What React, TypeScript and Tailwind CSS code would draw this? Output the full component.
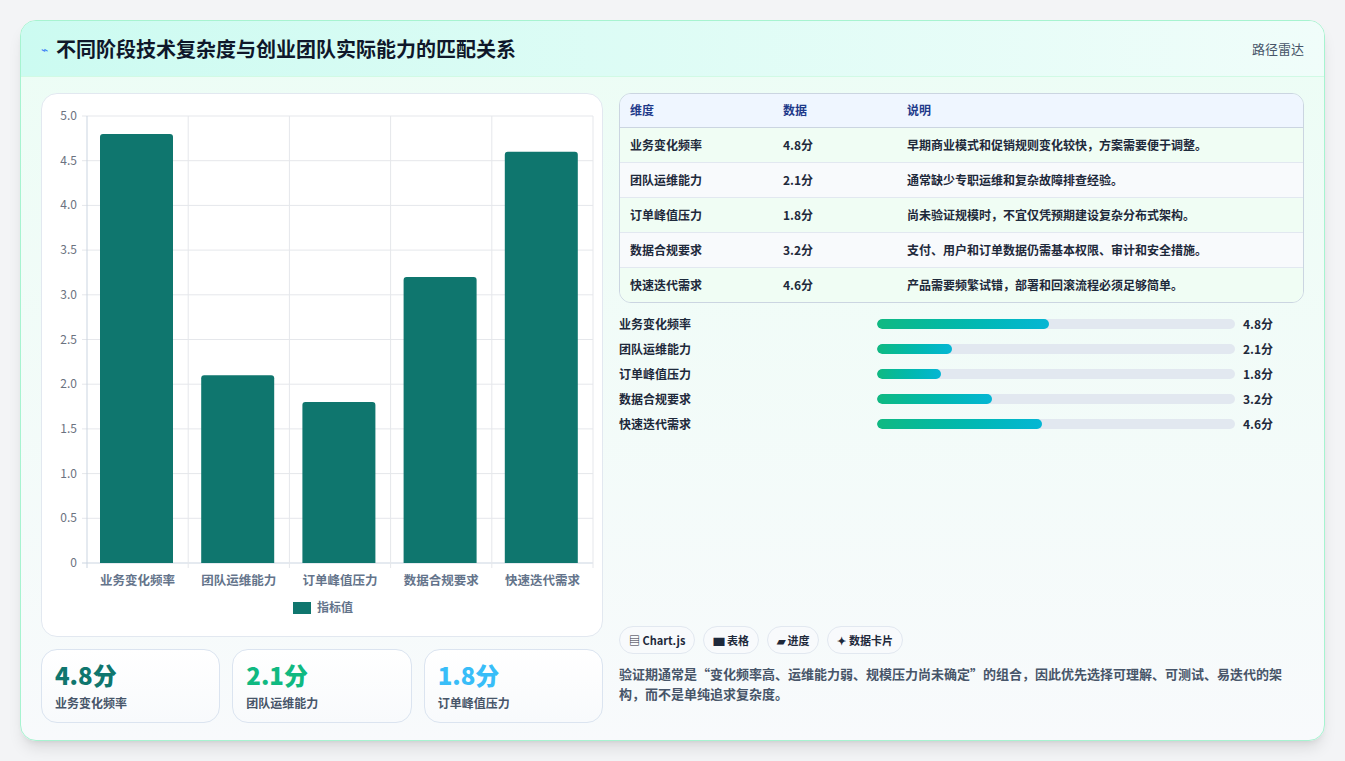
const rows = [
  { name: "业务变化频率", v: 4.8, note: "早期商业模式和促销规则变化较快，方案需要便于调整。" },
  { name: "团队运维能力", v: 2.1, note: "通常缺少专职运维和复杂故障排查经验。" },
  { name: "订单峰值压力", v: 1.8, note: "尚未验证规模时，不宜仅凭预期建设复杂分布式架构。" },
  { name: "数据合规要求", v: 3.2, note: "支付、用户和订单数据仍需基本权限、审计和安全措施。" },
  { name: "快速迭代需求", v: 4.6, note: "产品需要频繁试错，部署和回滚流程必须足够简单。" },
];

const font = { fontFamily: '"Noto Sans CJK SC", "Noto Sans", sans-serif' };

function Chart() {
  const x0 = 45, x1 = 551, yTop = 22, yBot = 469;
  const cw = (x1 - x0) / 5;
  const scale = (yBot - yTop) / 5;
  const ticks = [0, 0.5, 1, 1.5, 2, 2.5, 3, 3.5, 4, 4.5, 5];
  return (
    <svg width="562" height="543" className="block" style={font}>
      {ticks.map((t) => {
        const y = yBot - t * scale;
        return (
          <g key={t}>
            <line x1={x0 - 5} x2={x1} y1={y} y2={y} stroke={t === 0 ? "#cbd5e1" : "#e5e7eb"} />
            <text x={x0 - 10} y={y + 4} textAnchor="end" fontSize="12" fill="#6b7280">{t === 0 ? "0" : t.toFixed(1)}</text>
          </g>
        );
      })}
      {[0, 1, 2, 3, 4, 5].map((i) => (
        <line key={i} x1={x0 + i * cw} x2={x0 + i * cw} y1={yTop} y2={yBot + 5} stroke={i === 0 ? "#cbd5e1" : "#e5e7eb"} />
      ))}
      {rows.map((r, i) => {
        const h = r.v * scale;
        const bx = x0 + i * cw + 13;
        return (
          <g key={r.name}>
            <path d={`M${bx} ${yBot} V${yBot - h + 3} Q${bx} ${yBot - h} ${bx + 3} ${yBot - h} H${bx + 70} Q${bx + 73} ${yBot - h} ${bx + 73} ${yBot - h + 3} V${yBot} Z`} fill="#0f766e" />
            <text x={x0 + i * cw + cw / 2} y={491} textAnchor="middle" fontSize="12.5" fontWeight="600" fill="#64748b">{r.name}</text>
          </g>
        );
      })}
      <rect x={251} y={508} width={18} height={12} fill="#0f766e" />
      <text x={275} y={518} fontSize="12" fontWeight="600" fill="#64748b">指标值</text>
    </svg>
  );
}

export default function App() {
  const stats = [
    { v: "4.8分", l: "业务变化频率", c: "text-[#0f766e]" },
    { v: "2.1分", l: "团队运维能力", c: "text-[#10b981]" },
    { v: "1.8分", l: "订单峰值压力", c: "text-[#38bdf8]" },
  ];
  return (
    <div className="min-h-[761px] bg-[#f3f4f6] pt-5 px-5" style={font}>
      <div className="h-[721px] rounded-2xl border border-[#a7f3d0] bg-gradient-to-b from-[#ecfdf5] to-[#f8fafc] shadow-lg overflow-hidden">
        <div className="h-[56px] flex items-center justify-between px-5 bg-gradient-to-r from-[#ccfbf1] to-[#f0fdfa] border-b border-[#d1fae5]">
          <div className="flex items-center gap-2">
            <span className="text-[#3b82f6] text-xs">⌁</span>
            <h1 className="text-[20px] font-bold text-[#0f172a]">不同阶段技术复杂度与创业团队实际能力的匹配关系</h1>
          </div>
          <span className="text-[13px] text-[#475569]">路径雷达</span>
        </div>
        <div className="flex gap-4 px-5 pt-4">
          <div className="w-[562px] flex flex-col gap-3">
            <div className="h-[544px] rounded-2xl border border-[#e2e8f0] bg-white"><Chart /></div>
            <div className="grid grid-cols-3 gap-3">
              {stats.map((s) => (
                <div key={s.l} className="h-[74px] rounded-2xl border border-[#dbe4f0] bg-gradient-to-b from-white to-[#f8fafc] px-[13px] pt-[10px]">
                  <div className={`text-[24px] font-extrabold leading-[30px] ${s.c}`}>{s.v}</div>
                  <div className="text-[12px] font-semibold text-[#475569] mt-1">{s.l}</div>
                </div>
              ))}
            </div>
          </div>
          <div className="w-[688px] flex flex-col">
            <div className="rounded-xl border border-[#cbd5e1] overflow-hidden">
              <table className="w-full text-[12px] font-semibold text-[#1e293b]">
                <thead>
                  <tr className="bg-[#eff6ff] text-[#1e3a8a] h-[33px] border-b border-[#cbd5e1]">
                    <th className="text-left pl-[10px] w-[163px] font-semibold">维度</th>
                    <th className="text-left w-[124px] font-semibold">数据</th>
                    <th className="text-left font-semibold">说明</th>
                  </tr>
                </thead>
                <tbody>
                  {rows.map((r, i) => (
                    <tr key={r.name} className={`h-[35px] ${i % 2 ? "bg-[#f8fafc]" : "bg-[#f0fdf4]"} ${i < 4 ? "border-b border-[#e2e8f0]" : ""}`}>
                      <td className="pl-[10px]">{r.name}</td>
                      <td>{r.v}分</td>
                      <td>{r.note}</td>
                    </tr>
                  ))}
                </tbody>
              </table>
            </div>
            <div className="mt-[12px] flex flex-col gap-[7px]">
              {rows.map((r) => (
                <div key={r.name} className="flex items-center h-[18px] text-[12px] font-semibold text-[#1e293b]">
                  <span className="w-[258px]">{r.name}</span>
                  <div className="w-[358px] h-[10px] rounded-full bg-[#e2e8f0] overflow-hidden">
                    <div className="h-full rounded-full bg-gradient-to-r from-[#10b981] to-[#06b6d4]" style={{ width: `${r.v * 10}%` }} />
                  </div>
                  <span className="ml-[8px]">{r.v}分</span>
                </div>
              ))}
            </div>
            <div className="mt-auto mb-[19px]">
              <div className="flex gap-2">
                {["▤ Chart.js", "▆ 表格", "▰ 进度", "✦ 数据卡片"].map((c) => (
                  <span key={c} className="h-[28px] px-[9px] flex items-center rounded-full border border-[#e2e8f0] bg-[#f8fafc] text-[11px] font-semibold text-[#1e293b]">{c}</span>
                ))}
              </div>
              <p className="mt-[10px] text-[13px] font-semibold leading-[20px] text-[#475569]">验证期通常是“变化频率高、运维能力弱、规模压力尚未确定”的组合，因此优先选择可理解、可测试、易迭代的架构，而不是单纯追求复杂度。</p>
            </div>
          </div>
        </div>
      </div>
    </div>
  );
}
